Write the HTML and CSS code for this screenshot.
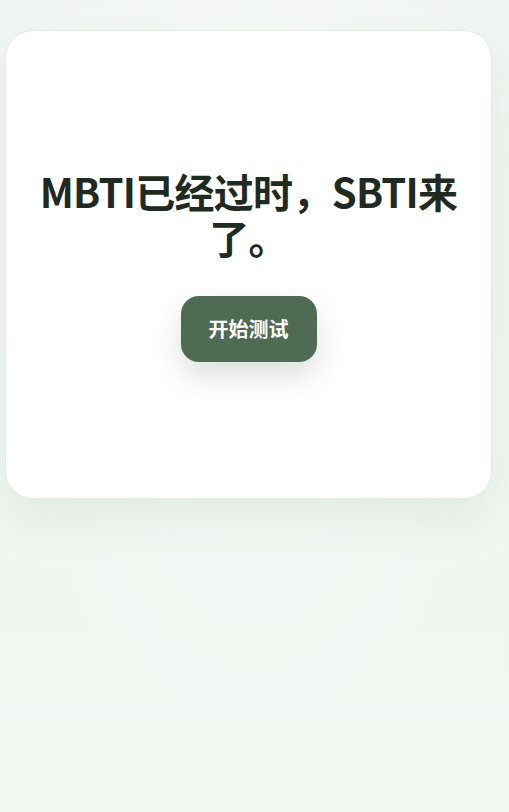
FILE: index.html
```html
<!DOCTYPE html>
<html lang="zh-CN">
<head>
  <meta charset="UTF-8">
  <title>SBTI</title>
  <link rel="stylesheet" href="styles.css">
</head>
<body>

  <div class="page">
    <div class="card">
      <h1 class="title">MBTI已经过时，SBTI来了。</h1>
      <button class="start-btn" type="button">开始测试</button>
    </div>
  </div>

</body>
</html>
```

FILE: styles.css
```css
body {
  margin: 0;
  min-height: 100vh;
  font-family: "Noto Sans CJK SC", "Noto Sans", sans-serif;
  background:
    radial-gradient(ellipse at 50% 30%, #f7faf7 0%, rgba(247, 250, 247, 0) 70%),
    linear-gradient(to bottom, #f1f5f1, #f2f7f2);
  color: #1f2a22;
}

.page {
  padding: 30px 17px 0 5px;
}

.card {
  height: 469px;
  background: #ffffff;
  border: 1px solid #e3ebe4;
  border-radius: 28px;
  box-shadow: 0 24px 50px rgba(60, 90, 65, 0.08);
  display: flex;
  flex-direction: column;
  align-items: center;
  justify-content: center;
  padding: 0 30px;
  box-sizing: border-box;
}

.title {
  margin: 0 0 36px;
  font-size: 40px;
  font-weight: 700;
  line-height: 46px;
  text-align: center;
  letter-spacing: -0.7px;
  color: #1f2a22;
}

.start-btn {
  width: 136px;
  height: 66px;
  border: none;
  border-radius: 18px;
  background-color: #4f6b53;
  color: #ffffff;
  font-family: inherit;
  font-size: 20px;
  font-weight: 700;
  box-shadow: 0 14px 30px rgba(40, 60, 45, 0.16);
  cursor: pointer;
}
```
